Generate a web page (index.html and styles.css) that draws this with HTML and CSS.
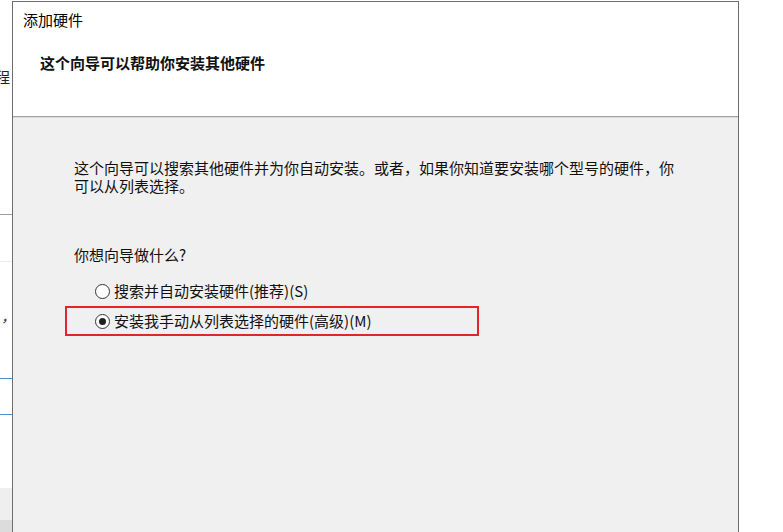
FILE: index.html
```html
<!DOCTYPE html>
<html lang="zh-CN">
<head>
<meta charset="utf-8">
<title>添加硬件</title>
<link rel="stylesheet" href="styles.css">
</head>
<body>
<div class="screen">
  <div class="strip">
    <div class="s-gap" style="height:68px"></div>
    <div class="s-char">程</div>
    <div class="s-gap" style="height:128px"></div>
    <div class="s-line gray"></div>
    <div class="s-gap" style="height:46px"></div>
    <div class="s-line faint"></div>
    <div class="s-gap" style="height:48px"></div>
    <div class="s-comma">,</div>
    <div class="s-gap" style="height:56px"></div>
    <div class="s-line blue"></div>
    <div class="s-gap" style="height:35px"></div>
    <div class="s-line blue"></div>
    <div class="s-gap" style="height:73px"></div>
    <div class="s-panel"></div>
    <div class="s-bar"></div>
  </div>
  <div class="dialog">
    <div class="header">
      <div class="title">添加硬件</div>
      <div class="heading">这个向导可以帮助你安装其他硬件</div>
    </div>
    <div class="content">
      <p class="desc">这个向导可以搜索其他硬件并为你自动安装。或者，如果你知道要安装哪个型号的硬件，你可以从列表选择。</p>
      <p class="question">你想向导做什么?</p>
      <div class="options">
        <div class="opt"><span class="radio"></span><span class="opt-text">搜索并自动安装硬件(推荐)(S)</span></div>
        <div class="opt selected"><span class="radio checked"></span><span class="opt-text">安装我手动从列表选择的硬件(高级)(M)</span></div>
      </div>
    </div>
  </div>
  <div class="right"></div>
</div>
</body>
</html>
```

FILE: styles.css
```css
* { box-sizing: border-box; }
html, body { margin: 0; padding: 0; }
body {
  width: 783px;
  height: 532px;
  overflow: hidden;
  background: #ffffff;
  font-family: "Noto Sans CJK SC", "Noto Sans", sans-serif;
  color: #000;
}
.screen {
  display: flex;
  width: 783px;
  height: 532px;
  background: #fff;
}
.strip {
  width: 12px;
  flex: 0 0 12px;
  display: flex;
  flex-direction: column;
  overflow: hidden;
  background: #fff;
}
.s-gap { flex: 0 0 auto; }
.s-char {
  height: 18px;
  line-height: 18px;
  font-size: 15px;
  text-indent: -5px;
  white-space: nowrap;
  color: #222;
}
.s-line { height: 1px; flex: 0 0 1px; }
.s-line.gray { background: #9c9c9c; }
.s-line.faint { background: #ececec; }
.s-line.blue { background: #4d8fd0; }
.s-comma {
  height: 12px;
  line-height: 12px;
  font-size: 12px;
  font-style: italic;
  font-weight: bold;
  padding-left: 3px;
  color: #444;
}
.s-panel { height: 32px; flex: 0 0 32px; background: #efefef; }
.s-bar { flex: 1; background: #dcdcdc; }

.dialog {
  width: 727px;
  flex: 0 0 727px;
  margin-top: 1px;
  height: 531px;
  border: 1px solid #6e6e6e;
  border-bottom: none;
  display: flex;
  flex-direction: column;
  background: #fff;
}
.header {
  height: 114px;
  flex: 0 0 114px;
  background: #fff;
  padding: 9px 0 0 10px;
}
.title {
  font-size: 15px;
  line-height: 18px;
}
.heading {
  margin: 25px 0 0 17px;
  font-size: 15px;
  line-height: 18px;
  font-weight: bold;
  color: #111;
}
.content {
  flex: 1;
  background: #f0f0f0;
  border-top: 1px solid #a3a3a3;
  box-shadow: inset 0 1px 0 #dadada;
  padding-top: 42px;
}
.desc {
  margin: 0 0 0 61px;
  width: 605px;
  font-size: 15px;
  line-height: 18px;
  color: #111;
}
.question {
  margin: 51px 0 0 61px;
  font-size: 15px;
  line-height: 18px;
  color: #111;
}
.options {
  margin: 12px 0 0 52px;
  display: flex;
  flex-direction: column;
}
.opt {
  width: 414px;
  height: 30px;
  border: 2px solid transparent;
  padding-left: 28px;
  display: flex;
  align-items: center;
  gap: 4px;
}
.opt.selected { border-color: #e0262b; }
.opt-text {
  font-size: 15px;
  line-height: 18px;
  color: #111;
}
.radio {
  width: 15px;
  height: 15px;
  flex: 0 0 15px;
  border-radius: 50%;
  border: 1px solid #333;
  background: #fff;
  display: flex;
  align-items: center;
  justify-content: center;
}
.radio.checked::after {
  content: "";
  width: 7px;
  height: 7px;
  border-radius: 50%;
  background: #222;
}
.right {
  flex: 1;
  background: #fff;
}
```
